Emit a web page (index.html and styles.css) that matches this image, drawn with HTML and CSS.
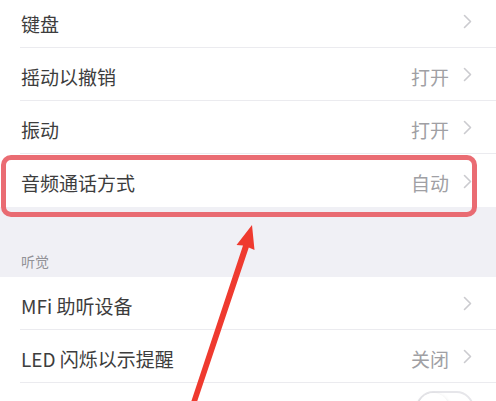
FILE: index.html
```html
<!DOCTYPE html>
<html lang="zh-CN">
<head>
<meta charset="utf-8">
<link rel="stylesheet" href="styles.css">
</head>
<body>
<div class="page">
  <div class="group group-first">
    <div class="row"><div class="row-inner"><span class="label">键盘</span><span class="value"></span><svg class="chev" viewBox="0 0 9 15"><path d="M1.5 1.5 L7.5 7.5 L1.5 13.5"/></svg></div></div>
    <div class="row"><div class="row-inner"><span class="label">摇动以撤销</span><span class="value">打开</span><svg class="chev" viewBox="0 0 9 15"><path d="M1.5 1.5 L7.5 7.5 L1.5 13.5"/></svg></div></div>
    <div class="row"><div class="row-inner"><span class="label">振动</span><span class="value">打开</span><svg class="chev" viewBox="0 0 9 15"><path d="M1.5 1.5 L7.5 7.5 L1.5 13.5"/></svg></div></div>
    <div class="row"><div class="row-inner last"><span class="label">音频通话方式</span><span class="value">自动</span><svg class="chev" viewBox="0 0 9 15"><path d="M1.5 1.5 L7.5 7.5 L1.5 13.5"/></svg></div></div>
  </div>
  <div class="section-header"><span>听觉</span></div>
  <div class="group">
    <div class="row"><div class="row-inner"><span class="label">MFi 助听设备</span><span class="value"></span><svg class="chev" viewBox="0 0 9 15"><path d="M1.5 1.5 L7.5 7.5 L1.5 13.5"/></svg></div></div>
    <div class="row"><div class="row-inner"><span class="label">LED 闪烁以示提醒</span><span class="value">关闭</span><svg class="chev" viewBox="0 0 9 15"><path d="M1.5 1.5 L7.5 7.5 L1.5 13.5"/></svg></div></div>
    <div class="row"><div class="row-inner last"><span class="label">单声道音频</span><span class="toggle"><span class="knob"></span></span></div></div>
  </div>

  <div class="highlight"></div>
  <svg class="arrow" viewBox="0 0 496 401" width="496" height="401">
    <polygon points="252,225 254.5,250 248.8,247.5 196.6,403 191.4,401 243,245.5 236.5,245" />
  </svg>
</div>
</body>
</html>
```

FILE: styles.css
```css
html, body {
  margin: 0;
  padding: 0;
  background: #ffffff;
}
body {
  font-family: "Noto Sans CJK SC", "Noto Sans", sans-serif;
  width: 496px;
  height: 401px;
  overflow: hidden;
}
.page {
  position: relative;
  width: 496px;
  height: 401px;
  overflow: hidden;
  background: #f0f0f5;
}
.group {
  background: #ffffff;
}
.group-first {
  margin-top: -5px;
}
.row {
  padding-left: 20px;
}
.row-inner {
  display: flex;
  align-items: center;
  box-sizing: border-box;
  height: 53px;
  padding: 4px 24px 0 1px;
  border-bottom: 1px solid #ebebef;
}
.row-inner.last {
  border-bottom: none;
}
.label {
  flex: 1;
  font-size: 19px;
  color: #3d3d3d;
  white-space: nowrap;
}
.value {
  font-size: 19px;
  color: #a0a0a4;
  margin-right: 14px;
}
.chev {
  width: 9px;
  height: 15px;
  margin-top: -3px;
  fill: none;
  stroke: #cbcbcf;
  stroke-width: 1.6;
  stroke-linecap: round;
  stroke-linejoin: round;
}
.section-header {
  height: 70px;
  box-sizing: border-box;
  display: flex;
  align-items: flex-end;
  padding: 0 0 6px 21px;
  font-size: 14px;
  line-height: 20px;
  color: #929297;
}
.toggle {
  position: relative;
  width: 58px;
  height: 35px;
  box-sizing: border-box;
  border: 2px solid #e6e6ea;
  border-radius: 18px;
  background: #ffffff;
  margin-right: -2px;
  margin-top: -6px;
}
.knob {
  position: absolute;
  left: 0;
  top: 0;
  width: 31px;
  height: 31px;
  border-radius: 50%;
  background: #ffffff;
  box-shadow: 0 2px 4px rgba(0,0,0,0.18);
}
.highlight {
  position: absolute;
  left: 1px;
  top: 155px;
  width: 476px;
  height: 62px;
  box-sizing: border-box;
  border: 5px solid rgba(232, 92, 100, 0.9);
  border-radius: 10px;
}
.arrow {
  position: absolute;
  left: 0;
  top: 0;
  fill: #ef3a2f;
}
```
